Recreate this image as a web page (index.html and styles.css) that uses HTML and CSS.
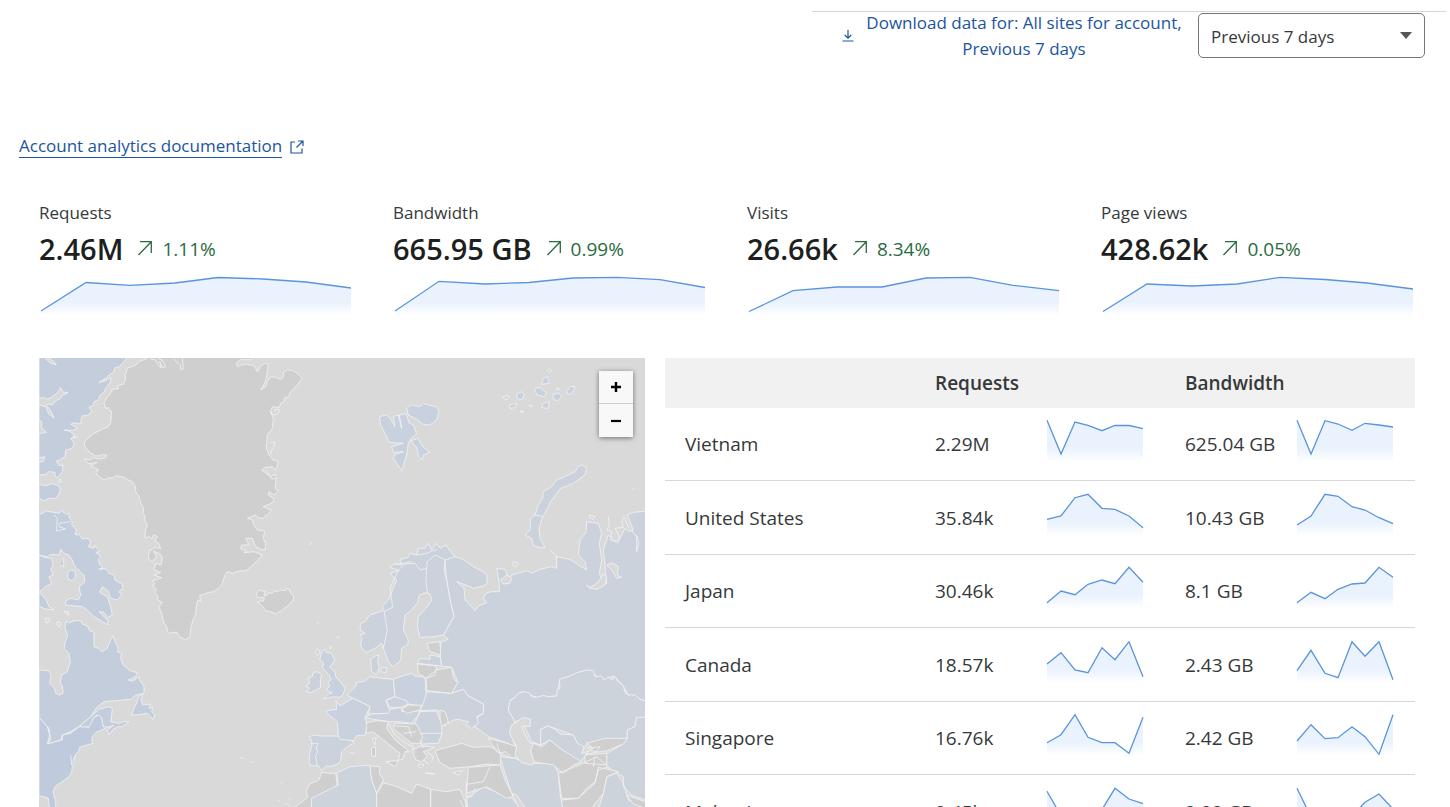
FILE: index.html
```html
<!DOCTYPE html>
<html lang="en">
<head>
<meta charset="utf-8">
<meta name="viewport" content="width=device-width, initial-scale=1">
<title>Account analytics</title>
<link rel="stylesheet" href="styles.css">
</head>
<body>
<svg class="defs" aria-hidden="true">
  <defs>
    <linearGradient id="fade" gradientUnits="userSpaceOnUse" x1="0" y1="30" x2="0" y2="44">
      <stop offset="0" stop-color="#eaf2fd"/><stop offset="1" stop-color="#ffffff"/>
    </linearGradient>
    <symbol id="trend-up" viewBox="0 0 16 16"><path d="M1.5 15 14 2M3 1.7h11.3V13" fill="none" stroke="currentColor" stroke-width="1.3"/></symbol>
  </defs>
</svg>

<header class="toolbar">
  <a class="download" href="#download">
    <svg class="download-icon" viewBox="0 0 12 14" aria-hidden="true"><path d="M6 1v8M2.8 6 6 9.2 9.2 6M.5 12h11" fill="none" stroke="currentColor" stroke-width="1.2"/></svg>
    <span class="download-text">Download data for: All sites for account, Previous 7 days</span>
  </a>
  <div class="select-wrap">
    <select class="range" aria-label="Time range">
      <option>Previous 7 days</option>
      <option>Previous 30 days</option>
    </select>
  </div>
</header>

<main class="page">
  <p class="docs">
    <a class="docs-link" href="#docs"><span class="docs-text">Account analytics documentation</span>
      <svg class="docs-icon" viewBox="0 0 14 14" aria-hidden="true"><path d="M5 2H1v11h11V8.5M8 1h5v5M13 1 6.5 7.5" fill="none" stroke="currentColor" stroke-width="1.2"/></svg>
    </a>
  </p>

  <section class="stats">
    <article class="stat">
      <h2 class="stat-label">Requests</h2>
      <p class="stat-row"><strong class="stat-value">2.46M</strong><svg class="trend" aria-hidden="true"><use href="#trend-up"/></svg><span class="change">1.11%</span></p>
      <svg class="stat-chart" viewBox="0 0 314 46" preserveAspectRatio="none" aria-hidden="true"><path class="area" d="M2 39 47 10.5 91 13.3 136 11 179 5.5 224 7 267 10 312 16V46H2Z"/><path class="line" d="M2 39 47 10.5 91 13.3 136 11 179 5.5 224 7 267 10 312 16"/></svg>
    </article>
    <article class="stat">
      <h2 class="stat-label">Bandwidth</h2>
      <p class="stat-row"><strong class="stat-value">665.95 GB</strong><svg class="trend" aria-hidden="true"><use href="#trend-up"/></svg><span class="change">0.99%</span></p>
      <svg class="stat-chart" viewBox="0 0 314 46" preserveAspectRatio="none" aria-hidden="true"><path class="area" d="M2 39 46 9.3 92 12 136 10.5 180 6 224 5.3 267 7.7 312 15.5V46H2Z"/><path class="line" d="M2 39 46 9.3 92 12 136 10.5 180 6 224 5.3 267 7.7 312 15.5"/></svg>
    </article>
    <article class="stat">
      <h2 class="stat-label">Visits</h2>
      <p class="stat-row"><strong class="stat-value">26.66k</strong><svg class="trend" aria-hidden="true"><use href="#trend-up"/></svg><span class="change">8.34%</span></p>
      <svg class="stat-chart" viewBox="0 0 314 46" preserveAspectRatio="none" aria-hidden="true"><path class="area" d="M2 39.5 46 18.7 90 15 135 15 179 6 223 5.3 266 13.3 312 18.7V46H2Z"/><path class="line" d="M2 39.5 46 18.7 90 15 135 15 179 6 223 5.3 266 13.3 312 18.7"/></svg>
    </article>
    <article class="stat">
      <h2 class="stat-label">Page views</h2>
      <p class="stat-row"><strong class="stat-value">428.62k</strong><svg class="trend" aria-hidden="true"><use href="#trend-up"/></svg><span class="change">0.05%</span></p>
      <svg class="stat-chart" viewBox="0 0 314 46" preserveAspectRatio="none" aria-hidden="true"><path class="area" d="M2 39.5 46 12 91 14 136 12 179 5.3 224 7.5 266 11 312 17V46H2Z"/><path class="line" d="M2 39.5 46 12 91 14 136 12 179 5.3 224 7.5 266 11 312 17"/></svg>
    </article>
  </section>

  <section class="detail">
    <div class="map">
      <svg class="world" viewBox="0 0 1818 1500" role="img" aria-label="Requests by country">
        <!-- Greenland and Baffin Island -->
        <g transform="translate(0 -9)">
          <path class="grey" d="M335 0 325 10 300 20 290 30 265 40 262 52 258 60 260 72 254 87 236 92 238 101 220 103 212 120 203 128 195 145 200 160 209 158 212 168 218 168 215 205 207 216 190 222 160 238 135 262 140 280 155 294 170 303 185 302 190 297 203 300 200 308 180 312 160 308 155 315 135 312 150 326 175 322 155 332 180 345 170 352 180 366 195 375 210 368 220 369 230 362 255 367 266 374 280 380 288 392 290 410 300 425 305 445 314 458 312 472 319 485 317 495 325 510 319 525 318 548 332 545 338 552 345 538 355 545 348 560 358 563 365 580 345 578 330 590 328 610 340 620 352 605 344 588 365 598 370 610 366 630 350 625 345 645 365 652 345 660 368 668 340 678 348 686 340 692 352 702 347 712 357 725 355 735 370 742 360 755 368 777 375 805 382 812 386 830 395 835 405 832 415 833 418 842 440 855 452 845 456 815 462 795 470 775 473 745 478 735 485 738 482 722 495 717 510 712 525 710 548 690 558 660 565 650 580 655 600 648 620 647 635 635 655 618 670 600 645 590 615 593 620 585 605 582 608 570 630 570 620 550 640 550 650 575 665 583 678 585 680 565 673 550 677 528 655 525 645 512 640 495 625 490 650 480 658 488 672 490 690 475 697 465 672 455 690 448 705 440 702 430 688 420 690 410 705 420 718 408 708 400 712 370 708 358 695 365 668 345 678 338 700 335 712 345 718 320 703 315 690 300 682 280 685 240 700 220 703 190 695 170 700 155 720 158 725 145 735 140 735 130 748 126 755 110 775 90 790 70 775 55 760 46 745 45 734 52 732 66 725 74 710 67 695 65 685 80 680 95 665 105 675 88 682 70 688 30 680 24 668 30 655 50 646 32 620 27 595 34 592 25 605 14 635 14 650 0Z"/>
          <path class="coast" d="M335 12 350 15 358 32 366 38 362 20 370 38 380 36 372 18 358 9M405 12 425 33 425 44 433 42 430 9M692 168 700 180 715 178 722 165 710 162 708 170M695 262 708 262 705 275 695 290 700 300M680 345 698 372 712 370M820 562 810 570"/>
          <path class="canada" d="M0 0H270L252 24 240 35 228 38 225 50 210 60 200 70 180 82 198 78 216 68 214 82 200 100 195 112 182 122 178 135 165 140 163 152 150 157 158 170 145 182 130 182 125 200 128 207 105 203 95 208 108 215 115 220 100 226 75 225 90 228 105 238 102 245 112 246 95 250 104 262 105 270 98 280 90 283 80 285 78 305 62 315 52 318 60 332 72 330 70 350 55 368 48 365 48 352 30 350 20 358 0 360Z"/>
          <path class="sea" d="M0 130 15 128 25 132 35 128 55 113 65 98 73 112 88 112 70 122 65 130 50 138 40 150 30 147 20 150 32 162 45 188 30 178 20 155 0 150ZM-5 190 8 200 8 218 22 232 5 235-5 230M18 9 35 25 52 30 45 20 28 9M0 308 18 305 12 320-5 320"/>
          <path class="canada" d="M0 388 20 392 40 386 58 392 64 405 60 417 50 430 30 430 15 438 0 430ZM60 374 66 374 66 382 60 382ZM0 478 10 475 20 468 45 472 60 475 68 468 82 478 90 475 92 492 100 500 98 508 112 525 108 538 122 540 130 552 148 550 155 562 148 575 165 580 168 572 182 590 170 592 186 605 178 612 182 628 192 640 180 642 202 642 210 655 225 660 228 675 250 688 252 700 240 710 248 720 235 735 215 730 208 708 190 695 182 712 205 725 215 755 220 780 205 788 195 772 180 770 205 795 207 810 190 800 165 785 145 765 130 755 80 750 80 738 95 730 118 735 125 720 120 695 138 680 135 660 115 642 105 630 100 615 90 600 75 595 65 583 60 600 35 598 25 605 0 600Z"/>
          <path class="coast" d="M45 480 55 490 52 528 80 522 60 515 60 505 95 500"/>
          <path class="canada" d="M0 600 20 608 38 610 42 635 35 640 42 660 30 665 38 685 20 695 0 712ZM0 710 22 735 30 755 45 765 20 762 0 755ZM86 655 95 643 108 650 110 665 98 678 86 670ZM65 630 75 635 72 610"/>
          <path class="sea" d="M18 790 30 790 32 800 22 804ZM55 800 66 804 62 815 52 808ZM75 770 88 770 90 780Z"/>
        </g>
        <!-- North Atlantic: Labrador to Iceland and Iberia -->
        <g transform="translate(0 666)">
          <path class="canada" d="M80 125 92 128 108 122 125 122 130 132 148 140 152 152 165 157 165 200 178 205 190 215 205 205 212 185 222 168 230 190 238 205 235 215 248 220 245 235 252 255 265 265 272 272 295 278 290 290 268 300 280 304 300 290 302 300 315 320 315 340 290 345 275 358 230 362 195 365 175 380 155 410 120 440 95 455 70 465 65 480 25 492 35 480 30 445 0 412V270L28 272 36 285 32 310 45 322 50 340 62 345 72 340 70 318 64 310 68 285 85 275 94 245 90 220 75 205 78 190 86 165 78 145Z"/>
          <path class="canada" d="M120 440 150 415 180 388 210 380 220 385 218 405 215 425 240 430 255 425 270 425 250 440 235 440 220 450 210 465 205 450 225 435 205 442 192 440 188 415 175 405 165 412 155 440 135 442ZM278 405 285 385 295 365 298 350 312 342 305 358 312 375 335 372 330 385 342 382 338 395 347 405 343 418 325 400 300 404Z"/>
          <path class="states" d="M0 412 25 440 32 465 25 492 50 485 70 480 70 465 95 460 120 440 150 442 165 412 180 405 188 415 192 440 205 442 170 458 160 470 158 482 162 490 140 496 122 502 118 515 108 525 108 545 100 560 98 575 90 590 65 608 50 618 42 635 50 665 50 700 32 690 28 655 15 650 0 648Z"/>
          <path class="coast" d="M95 525 98 555 106 530"/>
          <path class="grey" d="M652 42 660 30 678 35 675 48 685 45 688 38 700 40 705 32 715 35 725 30 740 32 742 24 752 30 755 40 765 48 762 60 750 75 730 90 710 102 695 95 680 92 672 80 655 65 675 62 675 52 655 52Z"/>
          <path class="coast" d="M833 126 840 130M895 168 900 176M603 536 612 532M618 532 622 536M636 545 642 547M725 610 730 613M715 660 722 664M735 668 740 672M748 660 756 655M742 670 752 678"/>
          <path class="uk" d="M848 215 858 208 862 218 875 218 887 238 880 252 872 262 888 275 890 290 900 300 918 325 912 345 900 352 880 350 852 357 868 342 880 338 862 330 872 318 866 308 876 300 872 288 858 272 850 262 855 250 842 240ZM833 208 842 212 838 225 830 222ZM872 198 878 200 874 206Z"/>
          <path class="europe" d="M808 293 820 290 822 278 835 275 848 285 844 300 845 322 832 330 815 338 800 335 812 325 800 318 812 310ZM812 470 825 465 850 468 893 468 945 485 945 490 925 500 908 515 905 540 900 550 875 560 862 558 848 572 838 558 815 557 810 545 812 520 820 490Z"/>
          <path class="coast" d="M815 490H838L832 502 836 515 830 530 835 558"/>
          <path class="grey" d="M848 577 870 580 890 580 895 618 875 632 855 642 845 655 822 655 815 700 765 682 790 665 805 652 803 630 812 612 840 600Z"/>
        </g>
        <!-- Mainland Europe, Russia, North Africa and Asia -->
        <g transform="translate(903 666)">
          <path class="russia" d="M315-60 330-78 345-70 370-62 400-40 430-25 440-15 442 10 430 18 400 25 385 18 350 5 372 25 375 60 405 92 415 78 440 68 430 55 440 38 455 35 478 35 478 10 470-35 495-32 505-10 500 10 515-15 560-28 575-20 600-32 635-40 650-35 650-70 690-62 740-30 735-55 715-75 720-120 738-142 740-175 775-170 785-140 778-110 785-60 778-20 790 15 800 10 795-40 790-90 805-135 825-115 840-125 855-155 865-145 880-150 862-195 880-203 930-208V368L865 345 850 318 822 288 790 300 765 285 740 270 690 288 660 298 650 348 590 352 545 335 510 362 505 390 525 425 512 460 525 500 500 488 445 470 405 440 410 415 430 400 430 372 385 348 370 328 335 340 353 305 335 262 305 258 300 225 303 185 325 178 310 165 342 110 330 60 320 0Z"/>
          <path class="sea" d="M740 15 750 22 770 10 782-5 790-20 800-8 795 15 770 28 748 24ZM800-45 815-52 835-40 832-15 845-8 830-5 815-30ZM482 0 490 12 510 10 515-5 500-15Z"/>
          <path class="coast" d="M805-190 808-165 800-150 815-145 812-120 835-112 838-130 825-155 850-158 845-175 852-190 865-160 890-130 890-85 897-110 890-135M750-195 765-190 758-182 748-188ZM875-275 882-270M520-55 535-50 528-38 518-45ZM630-90 650-72 648-62"/>
          <path class="europe" d="M62 190 66 175 60 165 75 160 60 150 62 130 75 125 90 105 130 92 128 78 145 60 160 25 170 0 150-20 178-28 150-38 165-50 185-45 180-62 205-68 210-80 230-75 235-95 255-95 265-110 275-90 290-110 300-95 318-105 330-88 345-70 315-60 312-30 320 0 330 60 342 110 310 165 285 170 240 172 232 140 235 110 262 80 275 60 270 42 255 38 238 45 232 70 215 90 195 105 190 150 205 180 203 195 185 205 182 240 160 262 145 245 132 210 125 190 105 205 80 218 65 205Z"/>
          <path class="coast" d="M130 205 142 150 132 95 158 82 150 25 175-30 195-48 225-50 240-30 260-35 262-55 285-75 315-60M260-35 258 0 262 40M165-45 215-55M230-75 260-80 290-92"/>
          <path class="europe" d="M92 238 105 228 118 225 112 245 118 262 110 285 95 275ZM125 262 140 262 138 278 122 275ZM20 345 45 322 50 308 75 303 90 290 125 295 160 298 165 350 138 360 145 385 170 400 85 402 90 380 40 355Z"/>
          <path class="uk" d="M-40 392-10 388-12 362 0 378 20 365 40 355 90 380 75 412 82 440 75 465 50 467 40 482 0 478-5 468-8 425-40 400Z"/>
          <path class="uk" d="M160 298 180 290 215 280 225 288 255 292 258 335 262 360 245 378 205 372 165 350Z"/>
          <path class="europe" d="M138 362 165 350 200 362 205 372 185 382 150 382ZM75 412 95 402 145 400 150 388 185 382 185 395 240 392 235 405 215 430 180 425 150 425 100 418ZM240 395 290 393 302 425 318 435 305 440 305 462 295 490 245 492 240 460 225 430ZM260 335 335 340 370 328 385 348 430 372 430 400 410 410 415 430 395 445 378 435 385 425 355 418 340 420 325 430 315 402 290 390 240 392 250 370ZM232 250 240 235 270 238 270 225 300 230 305 258Z"/>
          <path class="grey" d="M258 295 290 270 335 262 340 295 353 308 335 340 260 332ZM232 252 290 258 285 285 258 295 235 280ZM260 190 300 185 302 225 270 215ZM185 388 205 375 245 376 240 390 200 400ZM80 428 110 422 145 425 140 445 165 480 208 515 195 515 188 538 175 540 180 520 130 480 100 455 78 460ZM138 545 175 542 165 560ZM94 505 107 500 106 530 95 528ZM98 478 108 472 105 495ZM165 430 230 432 248 470 240 490 215 490 190 470 160 445ZM215 510 245 498 285 502 250 515 262 530 245 545 228 540ZM235 552 252 555 240 565ZM255 578 285 582ZM340 578 365 572 355 585ZM285 512 330 500 365 490 400 502 450 500 470 508 485 530 480 555 440 552 390 560 330 565 300 548ZM445 475 500 490 530 500 528 535 505 530 470 515ZM300 390 315 395 325 425 305 440 300 410Z"/>
          <path class="coast" d="M240 460H305M165 438 205 440 215 470M190 460 230 455M145 430 165 465 190 485 215 500M215 490 225 520M245 492 250 505M45 520 30 518M470 490 480 520 495 515 510 528M250 540 265 552M260 515 280 530 275 545"/>
          <path class="asia" d="M505 390 510 362 522 355 535 340 555 335 570 340 575 350 590 352 610 346 625 350 650 348 652 330 660 325 658 298 690 288 710 278 740 270 760 272 765 290 785 288 790 300 805 292 818 300 822 288 835 305 850 318 855 338 865 345 885 345 900 358 930 368V412L890 412 885 440 862 450 862 475 800 480 740 490 725 520 700 465 625 438 602 448V495L575 485 545 420 525 425Z"/>
          <path class="asia" d="M602 448 625 438 645 448 660 462 700 465 712 490 732 500 725 520 750 512 720 545 690 530 660 505 630 480 602 495ZM930 412 890 412 885 440 862 450 862 475 845 495 800 520 800 560 835 580 850 590 850 620 875 645 930 665ZM480 530 525 535 560 550 640 550 655 580 660 640 675 720 560 720 515 640 495 580ZM800 590 830 580 850 610 865 660 930 690V800H740L790 640ZM380 655 430 620 515 655 560 700V834H400ZM-10 578 30 560 90 555 95 600 110 640V834H-90L-85 655-5 615Z"/>
          <path class="sea" d="M508 460 515 435 550 412 572 418 570 440 545 438 550 455 570 490 590 490 585 505 572 510 582 545 575 555 545 548 525 525 530 500ZM515 640 530 645 560 690 540 690Z"/>
          <path class="grey" d="M580 490 605 500 630 480 660 505 725 545 700 555 670 580 640 555 582 545 572 512ZM740 490 795 475 862 475 850 492 800 512 735 522 760 505ZM735 525 800 520 800 555 735 550ZM655 580 680 570 725 552 770 530 805 560 775 570 765 605 740 625 715 655 665 655ZM665 660 715 655 765 610 775 562 835 575 800 590 790 640 750 690 740 800H680ZM860 645 915 665 930 690 880 672ZM385 562 480 555 495 600 520 650 500 655 440 620 380 640ZM90 558 120 560 118 580 130 600 110 640 95 600ZM110 640 130 608 165 618 215 640 230 612 272 628V834H110ZM272 628 320 635 360 628 378 670 400 834H272Z"/>
          <path class="coast" d="M385 612 430 605 450 560M380 605 378 650 395 650 405 625M740 505 780 500 770 515 750 512M765 530 760 560M360 660 375 690 380 655"/>
        </g>
        <!-- Arctic islands -->
        <g transform="translate(903 -9)">
          <path class="russia" d="M740 340 730 330 715 333 705 350 680 362 650 375 635 395 610 410 608 430 595 450 585 480 572 490 570 525 555 540 575 550 580 572 600 578 615 578 600 550 597 520 608 484 620 465 632 440 662 400 700 385 735 360Z"/>
          <path class="coast" d="M583 480 608 484"/>
          <path class="uk" d="M118 185 140 180 150 190 165 215 160 185 175 180 185 220 178 180 198 176 208 205 220 210 230 237 215 248 205 265 200 300 185 347 170 325 160 310 165 298 190 290 160 292 155 275 190 265 148 262 135 235 122 210ZM200 160 215 150 240 155 250 145 265 150 290 155 297 170 290 195 270 210 250 208 230 192 205 180ZM212 258 235 250 248 275 270 292 250 300 248 315 235 305 232 280ZM488 125 508 122 498 135ZM508 150 530 145 525 158 510 160ZM530 118 545 110 553 120 545 135 530 130ZM583 100 600 98 620 115 610 125 590 118ZM610 70 622 65 628 85 605 88ZM638 120 655 113 665 125 652 138 640 132ZM680 110 690 95 705 95 700 110 685 120ZM610 145 628 140 625 160 605 158ZM625 42 635 45 630 52 623 48ZM650 98 658 102 652 106ZM568 150 576 152 572 157ZM540 168 552 170 545 173Z"/>
        </g>
      </svg>
      <div class="zoom">
        <button class="zoom-btn" type="button" aria-label="Zoom in"><svg viewBox="0 0 12 12" width="12" height="12" aria-hidden="true"><path d="M1 6h10M6 1v10" stroke="#000" stroke-width="2.4"/></svg></button>
        <button class="zoom-btn" type="button" aria-label="Zoom out"><svg viewBox="0 0 12 12" width="12" height="12" aria-hidden="true"><path d="M1 6h10" stroke="#000" stroke-width="2.2"/></svg></button>
      </div>
    </div>

    <table class="countries">
      <thead>
        <tr><th scope="col" aria-label="Country"></th><th scope="col">Requests</th><th scope="col">Bandwidth</th></tr>
      </thead>
      <tbody>
        <tr><td>Vietnam</td>
          <td><div class="metric">2.29M<svg class="spark" viewBox="0 0 100 44" aria-hidden="true"><path class="area" d="M2 2.3 16 36 30 4 43 7.3 57 12.7 70 7.3 84 7.5 98 10.7V44H2Z"/><path class="line" d="M2 2.3 16 36 30 4 43 7.3 57 12.7 70 7.3 84 7.5 98 10.7"/></svg></div></td>
          <td><div class="metric">625.04 GB<svg class="spark" viewBox="0 0 100 44" aria-hidden="true"><path class="area" d="M2 2.3 16 36 30 2.7 43 6 57 12.3 70 5.3 84 7 98 9V44H2Z"/><path class="line" d="M2 2.3 16 36 30 2.7 43 6 57 12.3 70 5.3 84 7 98 9"/></svg></div></td></tr>
        <tr><td>United States</td>
          <td><div class="metric">35.84k<svg class="spark" viewBox="0 0 100 44" aria-hidden="true"><path class="area" d="M2 27.3 16 24 30 5.7 43 2.3 57 16.3 70 17.3 84 24 98 35.7V44H2Z"/><path class="line" d="M2 27.3 16 24 30 5.7 43 2.3 57 16.3 70 17.3 84 24 98 35.7"/></svg></div></td>
          <td><div class="metric">10.43 GB<svg class="spark" viewBox="0 0 100 44" aria-hidden="true"><path class="area" d="M2 33 16 24 30 2.3 43 4.3 57 14.7 70 18 84 25.7 98 31.7V44H2Z"/><path class="line" d="M2 33 16 24 30 2.3 43 4.3 57 14.7 70 18 84 25.7 98 31.7"/></svg></div></td></tr>
        <tr><td>Japan</td>
          <td><div class="metric">30.46k<svg class="spark" viewBox="0 0 100 44" aria-hidden="true"><path class="area" d="M2 37.7 16 26 30 29.7 43 19.3 57 15 70 18.7 84 2.3 98 17.3V44H2Z"/><path class="line" d="M2 37.7 16 26 30 29.7 43 19.3 57 15 70 18.7 84 2.3 98 17.3"/></svg></div></td>
          <td><div class="metric">8.1 GB<svg class="spark" viewBox="0 0 100 44" aria-hidden="true"><path class="area" d="M2 37.7 16 27.3 30 33.7 43 24.3 57 19 70 18 84 2.3 98 12.3V44H2Z"/><path class="line" d="M2 37.7 16 27.3 30 33.7 43 24.3 57 19 70 18 84 2.3 98 12.3"/></svg></div></td></tr>
        <tr><td>Canada</td>
          <td><div class="metric">18.57k<svg class="spark" viewBox="0 0 100 44" aria-hidden="true"><path class="area" d="M2 25 16 13.7 30 31 43 33.7 57 8.7 70 20.7 84 2.7 98 37.7V44H2Z"/><path class="line" d="M2 25 16 13.7 30 31 43 33.7 57 8.7 70 20.7 84 2.7 98 37.7"/></svg></div></td>
          <td><div class="metric">2.43 GB<svg class="spark" viewBox="0 0 100 44" aria-hidden="true"><path class="area" d="M2 31.7 16 11.3 30 34.3 43 38.7 57 2.7 70 17.3 84 2.7 98 40.7V44H2Z"/><path class="line" d="M2 31.7 16 11.3 30 34.3 43 38.7 57 2.7 70 17.3 84 2.7 98 40.7"/></svg></div></td></tr>
        <tr><td>Singapore</td>
          <td><div class="metric">16.76k<svg class="spark" viewBox="0 0 100 44" aria-hidden="true"><path class="area" d="M2 30.7 16 22.7 30 2.7 43 25.3 57 30.7 70 30.7 84 41.3 98 5.3V44H2Z"/><path class="line" d="M2 30.7 16 22.7 30 2.7 43 25.3 57 30.7 70 30.7 84 41.3 98 5.3"/></svg></div></td>
          <td><div class="metric">2.42 GB<svg class="spark" viewBox="0 0 100 44" aria-hidden="true"><path class="area" d="M2 29 16 12.7 30 26.7 43 25.7 57 14.7 70 24.7 84 42.3 98 2.7V44H2Z"/><path class="line" d="M2 29 16 12.7 30 26.7 43 25.7 57 14.7 70 24.7 84 42.3 98 2.7"/></svg></div></td></tr>
        <tr><td>Malaysia</td>
          <td><div class="metric">9.45k<svg class="spark" viewBox="0 0 100 44" aria-hidden="true"><path class="area" d="M2 5.3 16 29.7 30 34 43 38 57 23.5 70 2.3 84 13 98 17.7V44H2Z"/><path class="line" d="M2 5.3 16 29.7 30 34 43 38 57 23.5 70 2.3 84 13 98 17.7"/></svg></div></td>
          <td><div class="metric">2.09 GB<svg class="spark" viewBox="0 0 100 44" aria-hidden="true"><path class="area" d="M2 2.3 16 31 30 36 43 40 57 30 70 16.3 84 8 98 23V44H2Z"/><path class="line" d="M2 2.3 16 31 30 36 43 40 57 30 70 16.3 84 8 98 23"/></svg></div></td></tr>
      </tbody>
    </table>
  </section>
</main>
</body>
</html>
```
FILE: styles.css
```css
* { box-sizing: border-box; }

body {
  margin: 0;
  height: 100vh;
  overflow: hidden;
  background: #fff;
  color: #36393a;
  font-family: "Open Sans", "Noto Sans", sans-serif;
  font-size: 17px;
}

h2, p { margin: 0; font-weight: 400; }
a { color: #1b559f; text-decoration: none; }
.defs { position: absolute; width: 0; height: 0; }

.toolbar {
  display: flex;
  justify-content: flex-end;
  gap: 14px;
  width: 634px;
  max-width: 100%;
  margin: 11px 4px 0 auto;
  padding: 1px 21px 0 0;
  border-top: 1px solid #d5d7d8;
}
.download {
  display: flex;
  align-items: center;
  gap: 10px;
  height: 46px;
}
.download-icon { width: 12px; height: 14px; }
.download-text {
  width: 320px;
  line-height: 26px;
  text-align: center;
}
.select-wrap { position: relative; width: 227px; }
.select-wrap::after {
  content: "";
  position: absolute;
  top: 19px;
  right: 13px;
  border: 6px solid transparent;
  border-top: 7px solid #555;
  border-bottom: 0;
  pointer-events: none;
}
.range {
  width: 100%;
  height: 45px;
  padding: 2px 32px 0 12px;
  border: 1px solid #72777a;
  border-radius: 5px;
  background: #fff;
  color: #36393a;
  font: inherit;
  appearance: none;
}

.page { padding: 74px 35px 0 19px; }
.docs { line-height: 26px; }
.docs-link { display: inline-flex; align-items: center; gap: 8px; }
.docs-text { line-height: 22px; border-bottom: 1px solid #1b559f; }
.docs-icon { width: 14px; height: 14px; }

.stats {
  display: grid;
  grid-template-columns: repeat(4, 1fr);
  gap: 40px;
  padding: 41px 0 0 20px;
}
.stat-label { font-size: 17px; line-height: 26px; }
.stat-row { display: flex; align-items: center; line-height: 46px; }
.stat-value { color: #1d1f20; font-size: 29px; font-weight: 600; }
.trend { width: 16px; height: 16px; margin: 0 9px 2px 14px; color: #2a6b41; }
.change { color: #2a6b41; font-size: 19px; }
.stat-chart { display: block; width: 100%; height: 46px; }

.area { fill: url(#fade); }
.line { fill: none; stroke: #5a94dc; stroke-width: 1.3; vector-effect: non-scaling-stroke; }

.detail {
  display: grid;
  grid-template-columns: 606fr 750fr;
  gap: 20px;
  padding: 40px 0 0 20px;
}
.map { position: relative; overflow: hidden; background: #d9d9d9; }
.world { display: block; width: 100%; }
.world path { stroke: #f0f2f3; stroke-width: 2.5; stroke-linejoin: round; }
.world .grey { fill: #cfcfcf; }
.world .canada { fill: #c3cddb; }
.world .states { fill: #bfcadc; }
.world .uk { fill: #c8d1dd; }
.world .europe { fill: #cbd2dc; }
.world .russia { fill: #ccd2dc; }
.world .asia { fill: #ccd3db; }
.world .sea { fill: #d9d9d9; }
.world .coast { fill: none; }

.zoom {
  position: absolute;
  top: 13px;
  right: 12px;
  width: 34px;
  border-radius: 2px;
  box-shadow: 0 1px 5px rgba(0, 0, 0, .5);
}
.zoom-btn {
  display: flex;
  align-items: center;
  justify-content: center;
  width: 100%;
  height: 33px;
  padding: 0;
  border: 0;
  border-bottom: 1px solid #ccc;
  background: #f8f8f8;
}
.zoom-btn:last-child { border-bottom: 0; }

.countries {
  width: 100%;
  table-layout: fixed;
  border-collapse: separate;
  border-spacing: 0;
  align-self: start;
  font-size: 19px;
}
.countries th {
  height: 50px;
  padding: 0 20px;
  background: #f1f1f1;
  font-weight: 600;
  text-align: left;
}
.countries td {
  height: 73px;
  padding: 10px 20px;
  border-bottom: 1px solid #d5d7d8;
}
.countries tr:nth-child(even) td { height: 74px; }
.metric {
  display: flex;
  align-items: center;
  justify-content: space-between;
  height: 52px;
  white-space: nowrap;
}
.spark { flex: none; align-self: flex-start; width: 100px; height: 44px; }
```
